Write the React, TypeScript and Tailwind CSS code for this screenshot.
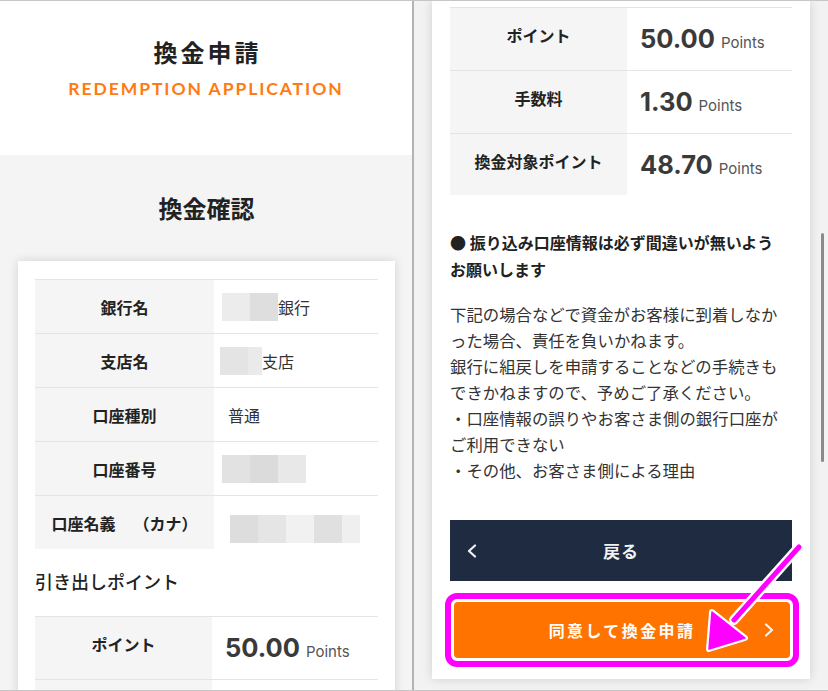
const num = "font-['Inter','Liberation_Sans',sans-serif]";

const Blur = ({ shades, last = 28 }: { shades: string[]; last?: number }) => (
  <div className="flex h-[28px]">
    {shades.map((c, i) => (
      <div
        key={i}
        className="h-full"
        style={{ backgroundColor: c, width: i === shades.length - 1 ? last : 28 }}
      />
    ))}
  </div>
);

const InfoRow = ({ label, children }: any) => (
  <div className="flex h-[54px] border-t border-[#e4e4e4]">
    <div className="w-[179px] shrink-0 bg-[#f5f5f5] flex items-center justify-center text-[16px] font-bold text-[#222]">
      {label}
    </div>
    <div className="flex-1 flex items-center pl-[8px] text-[16px] text-[#333]">{children}</div>
  </div>
);

const PointRow = ({ label, value, h = "h-[63px]" }: any) => (
  <div className={`flex ${h} border-t border-[#e4e4e4]`}>
    <div className="w-[177px] shrink-0 bg-[#f5f5f5] flex items-center justify-center pb-[8px] text-[16px] font-bold text-[#222]">
      {label}
    </div>
    <div className={`flex-1 flex items-baseline pl-[13px] pt-[18px] ${num}`}>
      <span className="text-[25.5px] font-bold text-[#3a3a3a] leading-none">{value}</span>
      <span className="ml-[6px] text-[15px] text-[#555] leading-none">Points</span>
    </div>
  </div>
);

const LeftScreen = () => (
  <div className="w-[412px] shrink-0 flex flex-col overflow-hidden">
    <div className="h-[154px] shrink-0 bg-white flex flex-col items-center">
      <div className="mt-[35px] text-[24px] leading-[32px] font-bold tracking-[3px] pl-[3px] text-[#222]">換金申請</div>
      <div className="mt-[9px] text-[17.5px] leading-[24px] font-bold tracking-[0.11em] text-[#ff7a12] font-['Lato','Noto_Sans',sans-serif]">
        REDEMPTION APPLICATION
      </div>
    </div>
    <div className="flex-1 bg-[#f4f4f4] pl-[18px] pr-[17px] flex flex-col">
      <div className="mt-[37px] text-center text-[24px] leading-[32px] font-bold text-[#222]">換金確認</div>
      <div className="mt-[37px] bg-white shadow-[0_0_10px_rgba(0,0,0,0.14)] px-[17px] pt-[18px] pb-[20px]">
        <InfoRow label="銀行名">
          <Blur shades={["#ececec", "#dedede"]} />
          <span>銀行</span>
        </InfoRow>
        <InfoRow label="支店名">
          <div className="-ml-[2px]">
            <Blur shades={["#e4e4e4", "#eaeaea"]} last={14} />
          </div>
          <span>支店</span>
        </InfoRow>
        <InfoRow label="口座種別">
          <span className="pl-[6px]">普通</span>
        </InfoRow>
        <InfoRow label="口座番号">
          <Blur shades={["#e2e2e2", "#dbdbdb", "#e8e8e8"]} />
        </InfoRow>
        <InfoRow
          label={
            <>
              <span>口座名義</span>
              <span className="ml-[18px]">（カナ）</span>
            </>
          }
        >
          <div className="pl-[8px] pt-[12px]">
            <Blur shades={["#dddddd", "#e5e5e5", "#f1f1f1", "#e0e0e0", "#efefef"]} last={18} />
          </div>
        </InfoRow>
        <div className="mt-[19px] text-[18px] leading-[27px] font-medium text-[#222]">引き出しポイント</div>
        <div className="mt-[21px]">
          <PointRow label="ポイント" value="50.00" />
          <div className="flex h-[63px] border-t border-[#e4e4e4]">
            <div className="w-[177px] shrink-0 bg-[#f5f5f5]" />
          </div>
        </div>
      </div>
    </div>
  </div>
);

const Chevron = ({ dir }: { dir: "l" | "r" }) => (
  <svg width="12" height="14" viewBox="0 0 12 14" fill="none">
    <polyline
      points={dir === "l" ? "9,1.5 3,7 9,12.5" : "3,1.5 9,7 3,12.5"}
      stroke="#f2f2f2"
      strokeWidth="2.2"
      strokeLinecap="round"
      strokeLinejoin="round"
    />
  </svg>
);

const RightScreen = () => (
  <div className="flex-1 relative bg-[#f2f2f2] px-[18px] overflow-hidden">
    <div className="bg-white shadow-[0_0_10px_rgba(0,0,0,0.14)] px-[18px] pt-[6px] pb-[12px]">
      <PointRow label="ポイント" value="50.00" />
      <PointRow label="手数料" value="1.30" />
      <PointRow label="換金対象ポイント" value="48.70" h="h-[62px]" />

      <div className="mt-[34px] text-[16px] leading-[27px] font-bold text-[#222]">
        <div>● 振り込み口座情報は必ず間違いが無いよう</div>
        <div>お願いします</div>
      </div>

      <div className="mt-[18px] text-[16.4px] leading-[26px] text-[#333] whitespace-nowrap">
        <div>下記の場合などで資金がお客様に到着しなか</div>
        <div>った場合、責任を負いかねます。</div>
        <div>銀行に組戻しを申請することなどの手続きも</div>
        <div>できかねますので、予めご了承ください。</div>
        <div>・口座情報の誤りやお客さま側の銀行口座が</div>
        <div>ご利用できない</div>
        <div>・その他、お客さま側による理由</div>
      </div>

      <div className="mt-[37px] h-[61px] bg-[#1f2b40] flex items-center px-[16px] relative">
        <Chevron dir="l" />
        <div className="absolute inset-0 flex items-center justify-center text-[17px] font-bold text-[#f2f2f2] tracking-[1px]">
          戻る
        </div>
      </div>

      <div className="mt-[12px] -ml-[5px] -mr-[7px] border-[6px] border-[#ff00ff] rounded-[12px] bg-white p-[3px]">
        <div className="h-[56px] rounded-[4px] bg-[#ff7300] flex items-center justify-end pr-[15px] relative">
          <div className="absolute inset-0 flex items-center justify-center text-[16px] font-bold text-white tracking-[0.15em]">
            同意して換金申請
          </div>
          <Chevron dir="r" />
        </div>
      </div>
    </div>

    <div className="absolute left-[407px] top-[232px] w-[3px] h-[229px] rounded-full bg-[#8a8a8a]" />

    <svg className="absolute inset-0 pointer-events-none" width="414" height="689" viewBox="0 0 414 689">
      <line x1="385" y1="546" x2="320" y2="619" stroke="#ffffff" strokeWidth="10" strokeLinecap="round" />
      <polygon points="295,648 298,611 331,637" fill="#ffffff" stroke="#ffffff" strokeWidth="6" strokeLinejoin="round" />
      <line x1="385" y1="546" x2="320" y2="619" stroke="#ff00ff" strokeWidth="5" strokeLinecap="round" />
      <polygon points="295,648 298,611 331,637" fill="#ff00ff" stroke="#ff00ff" strokeWidth="1.5" strokeLinejoin="round" />
    </svg>
  </div>
);

export default function App() {
  return (
    <div className="w-[828px] h-[691px] flex overflow-hidden border-y border-[#c6c6c6] bg-white font-['Noto_Sans_CJK_JP','Noto_Sans',sans-serif] text-[#222]">
      <LeftScreen />
      <div className="w-[2px] shrink-0 bg-[#b4b4b4]" />
      <RightScreen />
    </div>
  );
}
